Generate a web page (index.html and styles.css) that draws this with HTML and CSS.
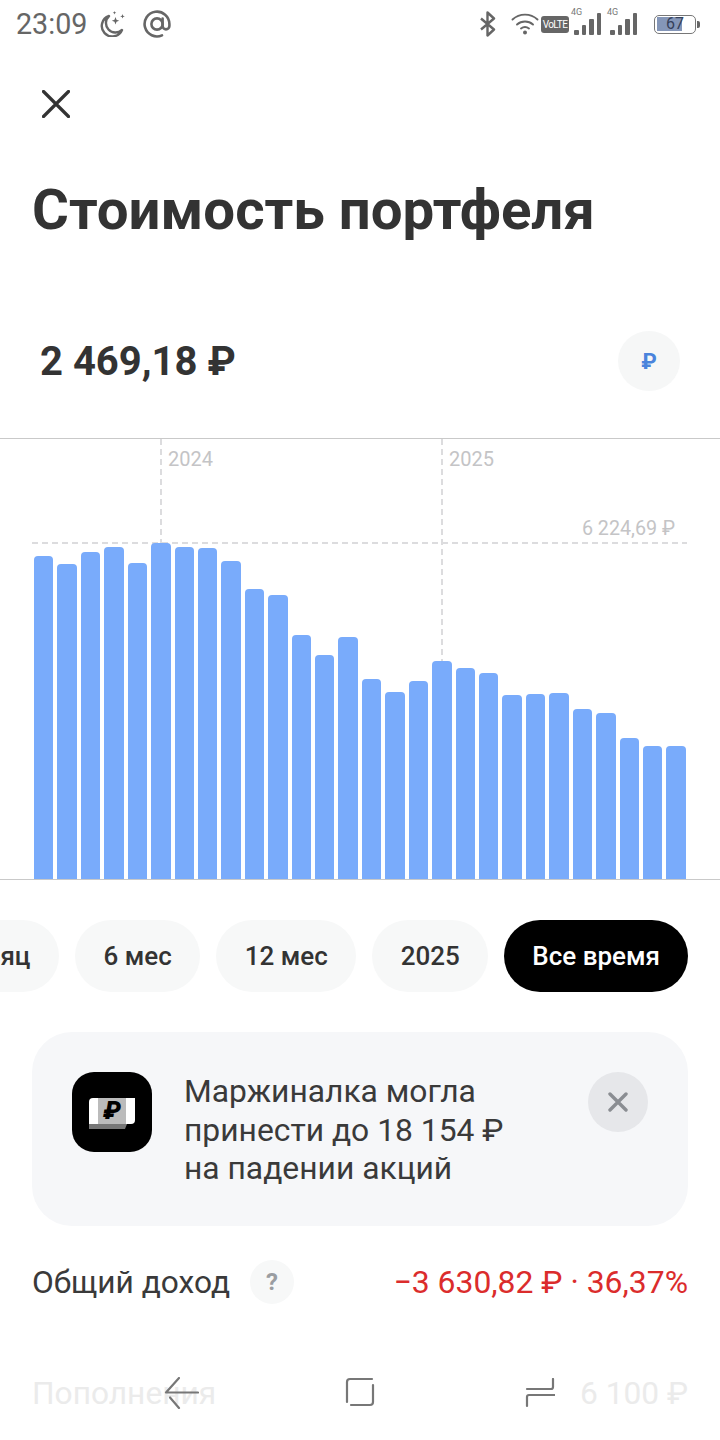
FILE: index.html
```html
<!DOCTYPE html>
<html lang="ru">
<head>
<meta charset="utf-8">
<title>Стоимость портфеля</title>
<link rel="stylesheet" href="styles.css">
</head>
<body>
<div class="screen">
  <header class="status">
    <div class="status-left">
      <span class="clock">23:09</span>
      <svg class="ic-moon" viewBox="0 0 26 26"><path d="M9 5a10.500 10.500 0 1 0 13 14 9 9 0 0 1-13-14z" fill="none" stroke="#666" stroke-width="2.400" stroke-linejoin="round"/><path d="M15.500 6l1 2.700 2.700 1-2.700 1-1 2.700-1-2.700-2.700-1 2.700-1zM22.500 3l.6 1.700 1.700.6-1.700.6-.6 1.700-.6-1.700-1.700-.6 1.700-.6zM14.500 0l.5 1.300 1.300.5-1.300.5-.5 1.300-.5-1.300-1.300-.5 1.300-.5z" fill="#666"/></svg>
      <svg class="ic-at" viewBox="0 0 30 30"><circle cx="15" cy="15" r="5.600" fill="none" stroke="#666" stroke-width="2.600"/><path d="M20.600 9.500v7.500a3.400 3.400 0 0 0 6.800 0V15A12.400 12.400 0 1 0 20 26.400" fill="none" stroke="#666" stroke-width="2.600" stroke-linecap="round"/></svg>
    </div>
    <div class="status-right">
      <svg class="ic-bt" viewBox="0 0 20 26"><path d="M3 7.500l13 11-6.500 6V1.500l6.500 6-13 11" fill="none" stroke="#666" stroke-width="2.400" stroke-linejoin="round"/></svg>
      <svg class="ic-wifi" viewBox="0 0 28 24"><path d="M1.500 7.500c7-6.500 18-6.500 25 0M6 12.500c4.500-4 11.500-4 16 0M10 16.500c2.400-1.800 5.600-1.800 8 0" fill="none" stroke="#666" stroke-width="1.900" stroke-linecap="round"/><circle cx="14" cy="20.500" r="2" fill="#666"/></svg>
      <span class="volte">VoLTE</span>
      <div class="signal"><span class="net">4G</span><i class="s1"></i><i class="s2"></i><i class="s3"></i><i class="s4"></i></div>
      <div class="signal second"><span class="net">4G</span><i class="s1"></i><i class="s2"></i><i class="s3"></i><i class="s4"></i></div>
      <div class="battery"><div class="battery-fill"></div><span class="battery-num">67</span></div>
      <span class="battery-tip"></span>
    </div>
  </header>

  <button class="close" aria-label="Закрыть">
    <svg viewBox="0 0 28 28"><path d="M1.500 1.500l25 25M26.500 1.500l-25 25" stroke="#333" stroke-width="3.200" stroke-linecap="round"/></svg>
  </button>

  <h1 class="title">Стоимость портфеля</h1>

  <div class="value-row">
    <span class="value">2 469,18 ₽</span>
    <span class="currency">₽</span>
  </div>

  <section class="chart">
    <div class="vline v2024"></div>
    <div class="vline v2025"></div>
    <div class="hline"></div>
    <span class="year y2024">2024</span>
    <span class="year y2025">2025</span>
    <span class="max">6 224,69 ₽</span>
    <div class="bars">
      <i style="height:323px"></i><i style="height:315px"></i><i style="height:327px"></i><i style="height:332px"></i>
      <i style="height:316px"></i><i style="height:336px"></i><i style="height:332px"></i><i style="height:331px"></i>
      <i style="height:318px"></i><i style="height:290px"></i><i style="height:284px"></i><i style="height:244px"></i>
      <i style="height:224px"></i><i style="height:242px"></i><i style="height:200px"></i><i style="height:187px"></i>
      <i style="height:198px"></i><i style="height:218px"></i><i style="height:211px"></i><i style="height:206px"></i>
      <i style="height:184px"></i><i style="height:185px"></i><i style="height:186px"></i><i style="height:170px"></i>
      <i style="height:166px"></i><i style="height:141px"></i><i style="height:133px"></i><i style="height:133px"></i>
    </div>
  </section>

  <nav class="periods">
    <span class="chip chip-month">Месяц</span>
    <span class="chip">6 мес</span>
    <span class="chip">12 мес</span>
    <span class="chip">2025</span>
    <span class="chip active">Все время</span>
  </nav>

  <aside class="promo">
    <div class="promo-logo">
      <svg viewBox="0 0 80 80"><path d="M21 26h42v22a4 4 0 0 1-4 4H17V30a4 4 0 0 1 4-4z" fill="#fff"/><path d="M17 52h38l-2 5H17z" fill="#777"/><rect x="26" y="26" width="28" height="26" fill="#bbb"/></svg>
      <span class="promo-glyph">₽</span>
    </div>
    <p class="promo-text">Маржиналка могла<br>принести до 18 154 ₽<br>на падении акций</p>
    <button class="promo-close" aria-label="Скрыть">
      <svg viewBox="0 0 20 20"><path d="M2 2l16 16M18 2L2 18" stroke="#8a8d92" stroke-width="3.400" stroke-linecap="round"/></svg>
    </button>
  </aside>

  <div class="row">
    <span class="row-label">Общий доход</span>
    <span class="hint">?</span>
    <span class="row-value loss">−3 630,82 ₽ · 36,37%</span>
  </div>

  <div class="row faded">
    <span class="row-label">Пополнения</span>
    <span class="row-value">6 100 ₽</span>
  </div>

  <div class="navbar">
    <svg class="nav-back" viewBox="0 0 36 32"><path d="M16 1L3 15.500h32M7 20.500L16 31" fill="none" stroke="#777" stroke-width="2.200" stroke-linecap="round" stroke-linejoin="round"/></svg>
    <svg class="nav-home" viewBox="0 0 30 30"><path d="M27 2H5a3 3 0 0 0-3 3v20M6 28h19a3 3 0 0 0 3-3V8" fill="none" stroke="#777" stroke-width="2.200" stroke-linecap="round"/></svg>
    <svg class="nav-recent" viewBox="0 0 30 30"><path d="M28 1v8a2 2 0 0 1-2 2H2M2 28v-9a2 2 0 0 1 2-2h26" fill="none" stroke="#777" stroke-width="2.200" stroke-linecap="round"/></svg>
  </div>
</div>
</body>
</html>
```
FILE: styles.css
```css
* { box-sizing: border-box; }
html, body { margin: 0; padding: 0; background: #fff; }
body { font-family: Roboto, "Noto Sans", sans-serif; color: #333; }

.screen { position: relative; width: 720px; height: 1440px; overflow: hidden; background: #fff; }

/* status bar */
.status { display: flex; justify-content: space-between; align-items: center; height: 48px; padding: 0 16px; }
.status-left { display: flex; align-items: center; }
.clock { font-size: 28.700px; color: #666; width: 71px; }
.ic-moon { width: 26px; height: 26px; margin-left: 13px; }
.ic-at { width: 30px; height: 30px; margin-left: 16px; }
.status-right { display: flex; align-items: center; position: relative; margin-right: 4px; }
.ic-bt { width: 20px; height: 26px; }
.ic-wifi { width: 28px; height: 24px; margin-left: 13px; }
.volte { width: 28px; height: 17px; margin-left: 2px; background: #666; color: #fff; border-radius: 3px; font-size: 10px; line-height: 17px; text-align: center; letter-spacing: -0.6px; }
.signal { position: relative; display: flex; align-items: flex-end; gap: 3px; width: 27px; height: 22px; margin-left: 5px; }
.signal.second { margin-left: 9px; }
.signal i { display: block; background: #666; width: 4.500px; border-radius: 1px; }
.signal .s1 { height: 5px; }
.signal .s2 { height: 10px; }
.signal .s3 { height: 16px; }
.signal .s4 { height: 22px; }
.net { position: absolute; top: -6px; left: -3px; font-size: 9px; color: #777; }
.battery { position: relative; width: 42px; height: 19px; margin-left: 17px; padding: 1.500px; border: 1.500px solid #777; border-radius: 5px; overflow: hidden; }
.battery-fill { height: 100%; width: 70%; background: #8496b8; }
.battery-num { position: absolute; inset: 0; text-align: center; font-size: 16px; line-height: 16px; color: #34405a; }
.battery-tip { width: 3px; height: 7px; margin-left: 1px; background: #666; border-radius: 0 2px 2px 0; }

/* heading */
.close { display: block; width: 28px; height: 28px; margin: 42px 0 0 42px; padding: 0; border: 0; background: none; }
.close svg { display: block; width: 28px; height: 28px; }
.title { margin: 58px 0 0 32px; font-size: 56.400px; line-height: 68px; font-weight: 700; color: #333; white-space: nowrap; }

.value-row { display: flex; justify-content: space-between; align-items: center; height: 60px; margin-top: 87px; padding: 0 40px; }
.value { font-size: 40px; font-weight: 700; color: #333; }
.currency { display: flex; align-items: center; justify-content: center; width: 62px; height: 60px; border-radius: 50%; background: #f6f7f7; color: #4a84dc; font-size: 22px; font-weight: 700; }

/* chart */
.chart { position: relative; height: 442px; margin-top: 47px; border-top: 1px solid #c9c9c9; border-bottom: 1px solid #c9c9c9; }
.bars { position: absolute; left: 34px; right: 34px; bottom: 0; display: flex; align-items: flex-end; gap: 4px; }
.bars i { display: block; flex: 1 1 0; background: #79abfb; border-radius: 4px 4px 0 0; }
.vline { position: absolute; top: 0; width: 2px; background: repeating-linear-gradient(to bottom, #dcdcde 0 6px, transparent 6px 10px); }
.v2024 { left: 160px; height: 104px; }
.v2025 { left: 441px; height: 222px; }
.hline { position: absolute; left: 32px; right: 33px; top: 103px; height: 2px; background: repeating-linear-gradient(to right, #dcdcde 0 6px, transparent 6px 10px); }
.year { position: absolute; top: 8px; font-size: 20px; line-height: 24px; color: #c4c4c6; }
.y2024 { left: 168px; }
.y2025 { left: 449px; }
.max { position: absolute; top: 78px; right: 45px; font-size: 19.700px; line-height: 24px; color: #c4c4c6; }

/* period selector */
.periods { display: flex; justify-content: flex-end; gap: 16px; margin-top: 40px; padding-right: 32px; }
.chip { flex: none; height: 72px; padding: 0 28.500px; border-radius: 36px; background: #f7f8f8; color: #333; font-size: 26px; font-weight: 500; line-height: 72px; white-space: nowrap; }
.chip.active { padding: 0 28px; background: #000; color: #fff; }

/* promo card */
.promo { position: relative; display: flex; align-items: flex-start; height: 194px; margin: 40px 32px 0; padding: 40px; border-radius: 40px; background: #f6f7f9; }
.promo-logo { position: relative; flex: none; width: 80px; height: 80px; border-radius: 22px; background: #000; }
.promo-logo svg { display: block; width: 80px; height: 80px; }
.promo-glyph { position: absolute; left: 26px; top: 25px; width: 28px; text-align: center; font-size: 25px; line-height: 28px; font-weight: 900; font-style: italic; color: #000; }
.promo-text { margin: 0 0 0 32px; font-size: 31.800px; line-height: 38.500px; color: #3a3a3a; white-space: nowrap; }
.promo-close { display: flex; align-items: center; justify-content: center; position: absolute; top: 40px; right: 40px; width: 60px; height: 60px; padding: 0; border: 0; border-radius: 50%; background: #e6e7ea; }
.promo-close svg { width: 20px; height: 20px; }

/* summary rows */
.row { display: flex; align-items: center; height: 48px; margin: 32px 32px 0; font-size: 31.700px; color: #3a3a3a; }
.row.faded { margin-top: 63px; color: #ebebeb; }
.hint { display: flex; align-items: center; justify-content: center; width: 44px; height: 44px; margin-left: 20px; border-radius: 50%; background: #f7f8f8; color: #9a9da1; font-size: 24px; font-weight: 700; }
.row-value { margin-left: auto; }
.loss { color: #db2c2c; font-size: 31.900px; }

/* navigation bar */
.navbar { position: absolute; left: 0; right: 0; bottom: 0; height: 96px; }
.nav-back { position: absolute; left: 163px; top: 33px; width: 36px; height: 32px; }
.nav-home { position: absolute; left: 345px; top: 33px; width: 30px; height: 30px; }
.nav-recent { position: absolute; left: 525px; top: 34px; width: 30px; height: 30px; }
```
